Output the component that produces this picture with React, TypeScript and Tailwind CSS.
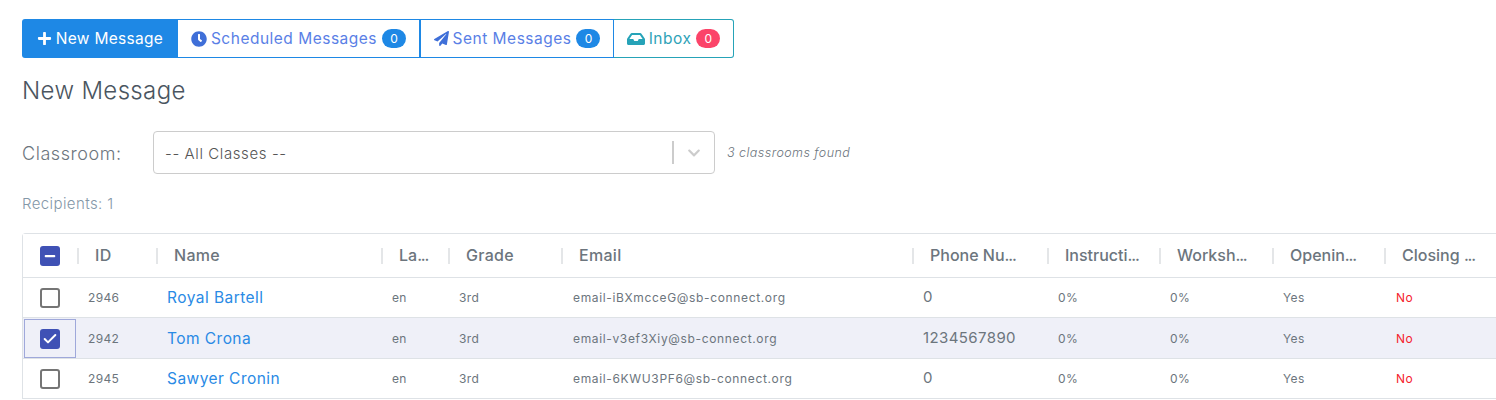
import { FaPlus, FaClock, FaPaperPlane, FaInbox, FaMinus, FaChevronDown } from 'react-icons/fa';
import { Check } from 'lucide-react';

const columns = 'grid grid-cols-[54px_79px_225px_67px_113px_351px_135px_112px_113px_112px_140px]';

const headers = [
  { label: 'ID' },
  { label: 'Name' },
  { label: 'La', cut: true },
  { label: 'Grade' },
  { label: 'Email' },
  { label: 'Phone Nu', cut: true },
  { label: 'Instructi', cut: true },
  { label: 'Worksh', cut: true },
  { label: 'Openin', cut: true },
  { label: 'Closing ', cut: true },
];

const rows = [
  { id: '2946', name: 'Royal Bartell', email: 'email-iBXmcceG@sb-connect.org', phone: '0', selected: false },
  { id: '2942', name: 'Tom Crona', email: 'email-v3ef3Xiy@sb-connect.org', phone: '1234567890', selected: true },
  { id: '2945', name: 'Sawyer Cronin', email: 'email-6KWU3PF6@sb-connect.org', phone: '0', selected: false },
];

function Badge({ color, children }: { color: string; children: string }) {
  return (
    <span className={`ml-px flex h-[19px] w-[24px] items-center justify-center rounded-full text-[12px] tracking-normal text-white ${color}`}>
      {children}
    </span>
  );
}

function Row({ row }: { row: (typeof rows)[number] }) {
  const cell = 'flex items-center pl-[11px] text-[12px] text-[#6c757d] whitespace-nowrap tracking-[0.35px]';
  return (
    <div className={`${columns} border-b border-[#dee2e6] ${row.selected ? 'h-[41px] bg-[#eff0f8] pt-px' : 'h-[40px] bg-white'}`}>
      <div className={`flex items-center justify-center ${row.selected ? 'mx-px border border-[#9fa8da]' : ''}`}>
        {row.selected ? (
          <span className="flex h-5 w-5 items-center justify-center rounded-[3px] bg-[#3f51b5] text-white">
            <Check size={16} strokeWidth={3} />
          </span>
        ) : (
          <span className="h-5 w-5 rounded-[3px] border-2 border-[#757575] bg-white" />
        )}
      </div>
      <div className={cell}>{row.id}</div>
      <div className="flex items-center pl-[11px] text-[15.5px] tracking-[0.45px] text-[#2a8ae5] whitespace-nowrap">{row.name}</div>
      <div className={cell}>en</div>
      <div className={cell}>3rd</div>
      <div className="flex items-center pl-[12px] text-[12px] tracking-[0.65px] text-[#6c757d] whitespace-nowrap">{row.email}</div>
      <div className="flex items-center pl-[11px] text-[15px] tracking-[0.4px] text-[#6c757d]">{row.phone}</div>
      <div className={cell}>0%</div>
      <div className={cell}>0%</div>
      <div className={cell}>Yes</div>
      <div className="flex items-center pl-[12px] text-[12px] tracking-[0.35px] text-[#f5222d]">No</div>
    </div>
  );
}

export default function App() {
  return (
    <div className="h-[400px] w-[1496px] overflow-hidden bg-white pl-[22px] pt-[19px] font-['Inter',sans-serif] text-[#6c757d]">
      <div className="flex h-[39px] w-[712px] text-[15.5px] tracking-[0.5px]">
        <button className="flex w-[156px] items-center justify-center gap-[4px] rounded-l-[3px] bg-[#1e88e5] tracking-[0.3px] text-white">
          <FaPlus size={15} />
          New Message
        </button>
        <button className="flex w-[242px] items-center justify-center gap-[4px] border border-l-0 border-[#1e88e5] text-[#5a7fe6]">
          <FaClock size={16} className="text-[#3f6fd8]" />
          Scheduled Messages
          <Badge color="bg-[#1e88e5]">0</Badge>
        </button>
        <button className="flex w-[194px] items-center justify-center gap-[4px] border border-[#1e88e5] text-[#5a7fe6]">
          <FaPaperPlane size={15} className="text-[#3f6fd8]" />
          Sent Messages
          <Badge color="bg-[#1e88e5]">0</Badge>
        </button>
        <button className="flex w-[120px] items-center justify-center gap-[4px] rounded-r-[3px] border border-l-0 border-[#26a3b8] text-[#2fa3b8]">
          <FaInbox size={18} className="text-[#26a3b8]" />
          Inbox
          <Badge color="bg-[#fb4469]">0</Badge>
        </button>
      </div>

      <h1 className="mt-[16px] h-[34px] text-[24px] font-light leading-[34px] tracking-[0.35px] text-[#4a5560]">New Message</h1>

      <div className="mt-[23px] flex h-[43px] items-center">
        <label className="w-[131px] pt-[2px] text-[18px] font-light tracking-[0.55px]">Classroom:</label>
        <div className="flex h-full w-[562px] items-center rounded-[4px] border border-[#cccccc] pl-[11px] text-[15px] font-light tracking-[0.6px] text-[#555]">
          <span className="flex-1 pt-[3px]">-- All Classes --</span>
          <span className="h-[23px] w-[2px] bg-[#cccccc]" />
          <span className="flex w-[40px] justify-center text-[#cccccc]">
            <FaChevronDown size={14} />
          </span>
        </div>
        <span className="ml-3 pt-[2px] text-[12.5px] font-light italic tracking-[0.45px]">3 classrooms found</span>
      </div>

      <div className="mt-[19px] text-[15px] font-light leading-[21px] tracking-[0.4px] text-[#8497a8]">Recipients: 1</div>

      <div className="mt-[19px] w-[1500px] rounded-tl-[4px] border-l border-t border-[#dee2e6]">
        <div className={`${columns} h-[44px] border-b border-[#dee2e6] bg-white`}>
          <div className="flex items-center justify-center">
            <span className="flex h-5 w-5 items-center justify-center rounded-[3px] bg-[#3f51b5] text-white">
              <FaMinus size={12} />
            </span>
          </div>
          {headers.map((h) => (
            <div key={h.label} className="flex items-center whitespace-pre">
              <span className="h-[16px] w-[2px] bg-[#e4e6e8]" />
              <span className={`pb-[2px] pl-[16px] text-[16px] font-medium text-[#6c757d] ${h.cut ? 'tracking-normal' : 'tracking-[0.3px]'}`}>
                {h.label}
                {h.cut && <span className="tracking-[-1.2px]">...</span>}
              </span>
            </div>
          ))}
        </div>
        {rows.map((row) => (
          <Row key={row.id} row={row} />
        ))}
      </div>
    </div>
  );
}
